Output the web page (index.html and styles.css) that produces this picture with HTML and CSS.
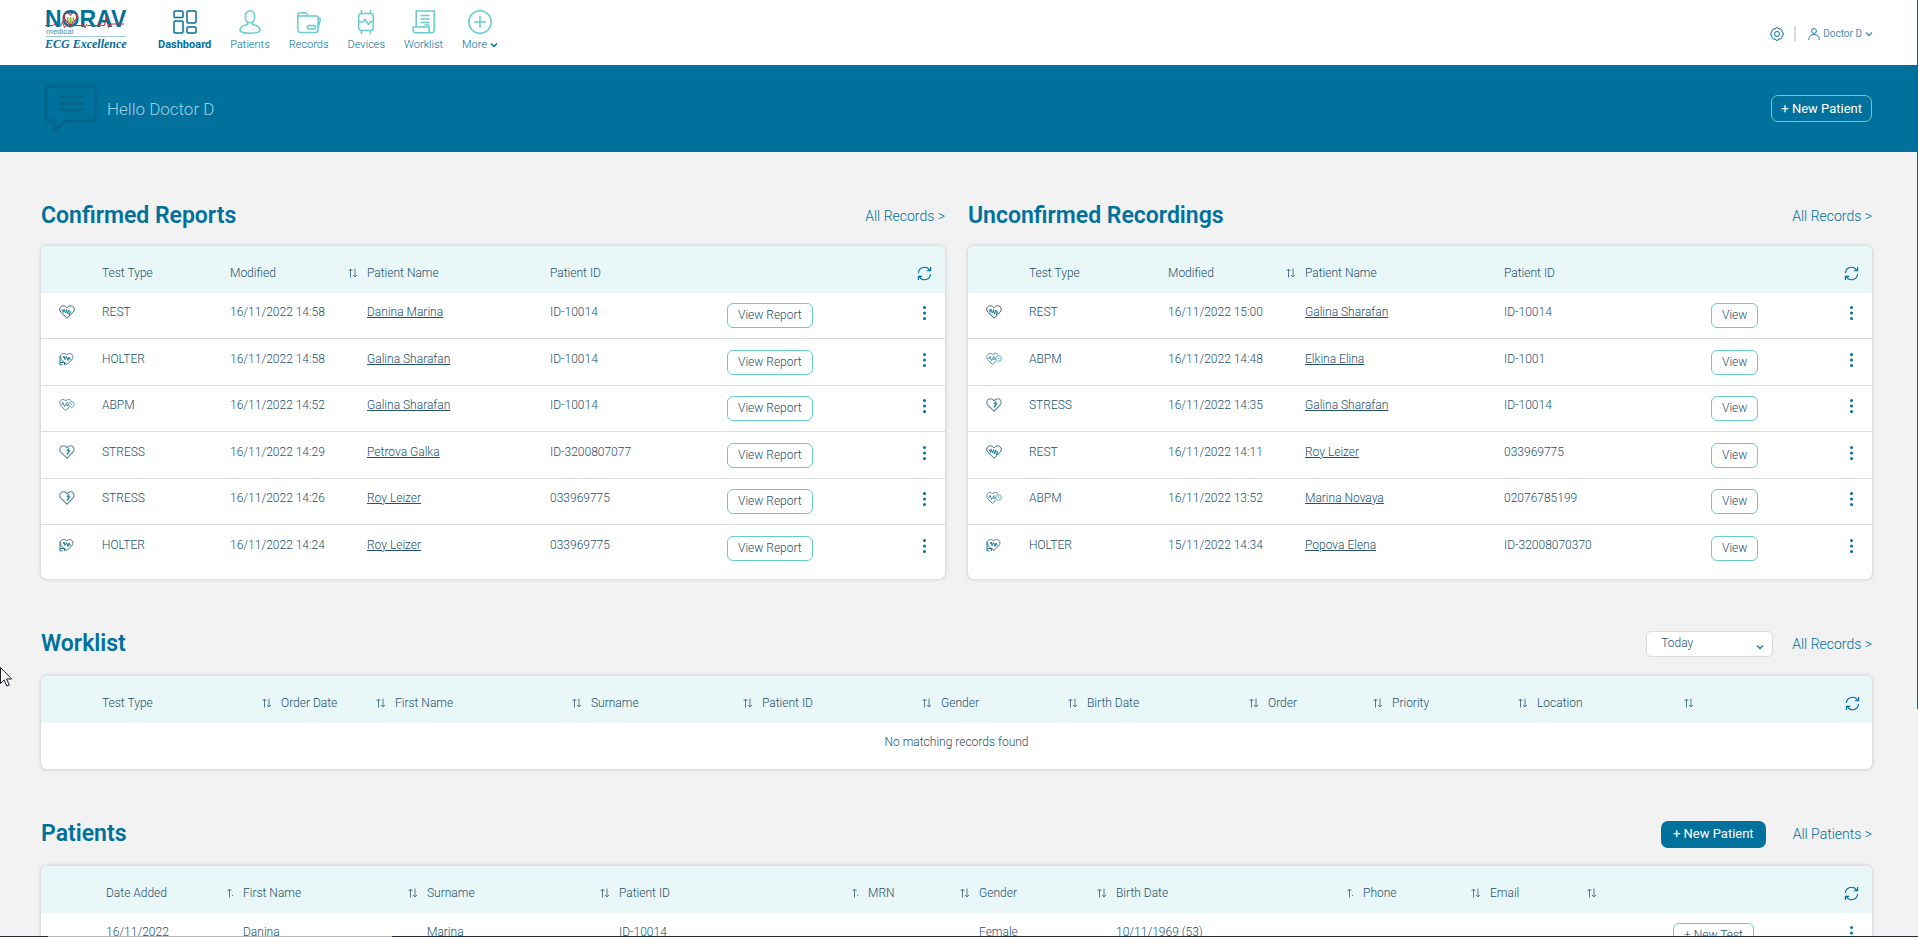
FILE: index.html
```html
<!DOCTYPE html>
<html lang="en">
<head>
<meta charset="utf-8">
<title>Dashboard</title>
<link rel="stylesheet" href="styles.css">
</head>
<body>
<svg class="sprite" aria-hidden="true">
  <symbol id="i-sort" viewBox="0 0 9 10"><path d="M2.5 9.5V1M.5 3L2.5 1l2 2M7 .5V9M5 7l2 2 2-2" fill="none" stroke="currentColor"/></symbol>
  <symbol id="i-sort-up" viewBox="0 0 6 10"><path d="M2.500 9.500V1M.5 3L2.500 1l2 2M5 7l1 1" fill="none" stroke="currentColor"/></symbol>
  <symbol id="i-refresh" viewBox="0 0 16 16"><path d="M1.500 7.500A6.500 6.500 0 0 1 13.500 4.500M14.500 1v4h-4M14.500 8.500A6.500 6.500 0 0 1 2.500 11.500M1.500 15v-4h4" fill="none" stroke="currentColor" stroke-width="1.200"/></symbol>
  <symbol id="i-dots" viewBox="0 0 3 14"><circle cx="1.500" cy="1.500" r="1.500" fill="currentColor"/><circle cx="1.500" cy="7" r="1.500" fill="currentColor"/><circle cx="1.500" cy="12.500" r="1.500" fill="currentColor"/></symbol>
  <symbol id="i-rest" viewBox="0 0 16 14"><path d="M8 13.200L1.800 7.200C-.6 4.200 1.400.8 4.300.8 6 .8 7.200 1.600 8 2.800 8.800 1.600 10 .8 11.700.8c2.900 0 4.900 3.400 2.500 6.400z" fill="none" stroke="#355f78"/><path d="M3 4.500l1.500 3 .5-3.500 1.500 4L7.500 4.500l1 4.500 1-4 1 5 1-3-1-1.500" fill="none" stroke="#1f86ad"/></symbol>
  <symbol id="i-holter" viewBox="0 0 16 14"><path d="M8 12.500L3.500 9C-.5 4.500 2 1.500 4.500 1.500c1.500 0 2.300.5 3 1.500.8-1 2-1.500 3-1.500 3 0 4.500 3 2.500 6z" fill="none" stroke="#54758a"/><path d="M1 13V3.500M1 10.500h4.500V13M1 12.800h2.500M4 6l1-2 1 3.500L7.500 4.500 9 8.500l1-3.500L11.500 8" fill="none" stroke="#1f7a9f"/></symbol>
  <symbol id="i-abpm" viewBox="0 0 16 14"><path d="M6.500 12.500L1.600 7.500C-.3 4.500 1.500 1.500 4 1.500c1.300 0 2.200.6 2.800 1.500.7-1 1.700-1.500 2.900-1.500 1.300 0 2 .5 2.600 1.200M6.500 12.500L10 9.500" fill="none" stroke="#66879a"/><circle cx="12.500" cy="6.500" r="2.800" fill="none" stroke="#62a8c4"/><path d="M2.500 7l1.500-2.500 1.500 4L8 4.500V8l2-1.500M12 5.500l1 1.500" fill="none" stroke="#3f93b5"/></symbol>
  <symbol id="i-stress" viewBox="0 0 16 14"><path d="M8 13.200L1.800 7.200C-.6 4.200 1.400.8 4.300.8 6 .8 7.200 1.600 8 2.800 8.800 1.600 10 .8 11.700.8c2.900 0 4.600 3.400 2.300 6.400z" fill="none" stroke="#64829a" stroke-width="1.100"/><path d="M10 3.500L8.500 5.500l2 .5L8 9.500" fill="none" stroke="#1f86ad" stroke-width="1.300"/></symbol>
  <symbol id="i-chev" viewBox="0 0 8 6"><path d="M1 1.500l3 3 3-3" fill="none" stroke="currentColor" stroke-width="1.500"/></symbol>
</svg>

<header class="topbar">
  <a class="logo" href="#" aria-label="Norav Medical">
    <svg width="84" height="44" viewBox="0 0 84 44">
      <text x="0" y="19" class="logo-name">NORAV</text>
      <circle cx="25.500" cy="11" r="5.500" fill="#fff"/>
      <path d="M25.500 17.500l-5.500-6C18 8 20.500 5 22.500 5c1.500 0 2.500.8 3 2 .5-1.200 1.500-2 3-2 2 0 4.500 3 2.500 6.500z" fill="#fff" stroke="#e0242f" stroke-width="1.200"/>
      <path d="M22.500 9v3.500l3 3.500 3-3.500V9M25.500 9v7M24 10v4M27 10v4" stroke="#78b928" fill="none"/>
      <path d="M0 17.500h8l1.500-1.500 1.500 1.500h5l1.500-4 2 6 1.500-2h3l1.500 2 2-2h9l1.500-1.500L40 20l1.500-3.500 1 1h10l2-1.500 2 1.500h3l1.500-9 2.500 11 1.500-3.500h6l2-1.500 2 1.500h4" stroke="#e0242f" fill="none"/>
      <text x="1" y="26" class="logo-sub">medical</text>
      <path d="M1 28.500h80" stroke="#9cc9dd"/>
      <text x="0" y="40" class="logo-tag">ECG Excellence</text>
    </svg>
  </a>
  <nav class="nav">
    <a class="nav-item active" href="#"><svg viewBox="0 0 24 24"><rect x="1" y="1" width="9" height="6.500" rx="1"/><rect x="14" y="1" width="9" height="12" rx="1"/><rect x="1" y="11" width="9" height="12" rx="1"/><rect x="14" y="17" width="9" height="6" rx="1"/></svg><span>Dashboard</span></a>
    <a class="nav-item" href="#"><svg viewBox="0 0 24 24"><rect x="7.500" y=".8" width="9" height="12" rx="4.500"/><path d="M9.500 11.500v3C5 15.500 2 16.500 2 20c0 2 4 3.200 10 3.200S22 22 22 20c0-3.500-3-4.500-7.500-5.500v-3"/></svg><span>Patients</span></a>
    <a class="nav-item" href="#"><svg viewBox="0 0 24 24"><path d="M.8 19V5c0-1.500.7-2.200 2-2.200h5.500c2 0 1.500 3.200 3.200 3.200H19c1.300 0 2 .7 2 2v12c0 1.500-.8 2.400-2 2.400H3c-1.500 0-2.200-1.400-2.200-3.400zM1 6h10M20 22.400l3.200-12.400V8.500L21 8"/><rect x="10.500" y="15.500" width="8" height="3.500" rx="1"/></svg><span>Records</span></a>
    <a class="nav-item" href="#"><svg viewBox="0 0 24 24"><rect x="4.700" y="3.500" width="14.600" height="17" rx="3"/><path d="M7.500 0v3.500M16.500 0v3.500M7.500 20.500V24M16.500 20.500V24M5 12h3.500l2.500-2.500 3.500 5 2.500-3h2.500"/></svg><span>Devices</span></a>
    <a class="nav-item" href="#"><svg viewBox="0 0 24 24"><path d="M4.200 17V1h18v18.500c0 2-1 3.300-2.600 3.300H4C1 22.800 1 21 1 17h16v3c0 1.800 1 2.800 2.600 2.800M8.500 5.500h9M8.500 9h9M8.500 12.500h9M12.500 15h5"/></svg><span>Worklist</span></a>
    <a class="nav-item" href="#"><svg viewBox="0 0 24 24"><circle cx="12" cy="12" r="11.200"/><path d="M12 6v12M6 12h12"/></svg><span>More <svg class="chev"><use href="#i-chev"/></svg></span></a>
  </nav>
  <div class="account">
    <button class="icon-btn" aria-label="Settings"><svg width="16" height="16" viewBox="0 0 16 16" fill="none" stroke="currentColor"><path d="M12.800 6a2.050 2.050 0 0 1 0 4 2.050 2.050 0 0 1-2.800 2.800 2.050 2.050 0 0 1-4 0 2.050 2.050 0 0 1-2.800-2.800 2.050 2.050 0 0 1 0-4 2.050 2.050 0 0 1 2.800-2.800 2.050 2.050 0 0 1 4 0 2.050 2.050 0 0 1 2.800 2.800z"/><circle cx="8" cy="8" r="2.500"/></svg></button>
    <span class="divider"></span>
    <button class="user"><svg width="12" height="12" viewBox="0 0 12 12" fill="none" stroke="#1f7ba5"><circle cx="6" cy="3" r="2.400"/><path d="M.8 12c0-4 2-5.400 5.200-5.400s5.200 1.400 5.200 5.400"/></svg><span>Doctor D</span><svg class="chev"><use href="#i-chev"/></svg></button>
  </div>
</header>

<div class="banner">
  <svg width="54" height="50" viewBox="0 0 54 50" fill="none" stroke="#02658e" stroke-width="3"><path d="M7 2h40c3.500 0 5 1.500 5 5v25c0 3.500-1.500 5-5 5H22L10 46.500V37H7c-3.500 0-5-1.500-5-5V7c0-3.500 1.500-5 5-5z"/><path d="M15 13h24M15 19.500h24M15 26h24"/></svg>
  <p class="hello">Hello Doctor D</p>
  <button class="btn btn-ghost">+ New Patient</button>
</div>

<main class="main">
  <div class="pair">
    <section>
      <div class="head"><h2>Confirmed Reports</h2><a class="more" href="#">All Records &gt;</a></div>
      <div class="card">
        <table class="confirmed">
          <colgroup><col><col><col><col><col><col><col></colgroup>
          <thead><tr><th></th><th>Test Type</th><th><div class="th">Modified<svg class="sort"><use href="#i-sort"/></svg></div></th><th>Patient Name</th><th>Patient ID</th><th></th><th class="end"><button class="icon-btn" aria-label="Refresh"><svg class="refresh"><use href="#i-refresh"/></svg></button></th></tr></thead>
          <tbody>
            <tr><td class="ic"><svg class="type"><use href="#i-rest"/></svg></td><td>REST</td><td>16/11/2022 14:58</td><td><a href="#">Danina Marina</a></td><td>ID-10014</td><td class="act"><button class="btn-row">View Report</button></td><td class="end"><button class="icon-btn" aria-label="Actions"><svg class="dots"><use href="#i-dots"/></svg></button></td></tr>
            <tr><td class="ic"><svg class="type"><use href="#i-holter"/></svg></td><td>HOLTER</td><td>16/11/2022 14:58</td><td><a href="#">Galina Sharafan</a></td><td>ID-10014</td><td class="act"><button class="btn-row">View Report</button></td><td class="end"><button class="icon-btn" aria-label="Actions"><svg class="dots"><use href="#i-dots"/></svg></button></td></tr>
            <tr><td class="ic"><svg class="type"><use href="#i-abpm"/></svg></td><td>ABPM</td><td>16/11/2022 14:52</td><td><a href="#">Galina Sharafan</a></td><td>ID-10014</td><td class="act"><button class="btn-row">View Report</button></td><td class="end"><button class="icon-btn" aria-label="Actions"><svg class="dots"><use href="#i-dots"/></svg></button></td></tr>
            <tr><td class="ic"><svg class="type"><use href="#i-stress"/></svg></td><td>STRESS</td><td>16/11/2022 14:29</td><td><a href="#">Petrova Galka</a></td><td>ID-3200807077</td><td class="act"><button class="btn-row">View Report</button></td><td class="end"><button class="icon-btn" aria-label="Actions"><svg class="dots"><use href="#i-dots"/></svg></button></td></tr>
            <tr><td class="ic"><svg class="type"><use href="#i-stress"/></svg></td><td>STRESS</td><td>16/11/2022 14:26</td><td><a href="#">Roy Leizer</a></td><td>033969775</td><td class="act"><button class="btn-row">View Report</button></td><td class="end"><button class="icon-btn" aria-label="Actions"><svg class="dots"><use href="#i-dots"/></svg></button></td></tr>
            <tr><td class="ic"><svg class="type"><use href="#i-holter"/></svg></td><td>HOLTER</td><td>16/11/2022 14:24</td><td><a href="#">Roy Leizer</a></td><td>033969775</td><td class="act"><button class="btn-row">View Report</button></td><td class="end"><button class="icon-btn" aria-label="Actions"><svg class="dots"><use href="#i-dots"/></svg></button></td></tr>
          </tbody>
        </table>
      </div>
    </section>
    <section>
      <div class="head"><h2>Unconfirmed Recordings</h2><a class="more" href="#">All Records &gt;</a></div>
      <div class="card">
        <table class="unconfirmed">
          <colgroup><col><col><col><col><col><col><col></colgroup>
          <thead><tr><th></th><th>Test Type</th><th><div class="th">Modified<svg class="sort"><use href="#i-sort"/></svg></div></th><th>Patient Name</th><th>Patient ID</th><th></th><th class="end"><button class="icon-btn" aria-label="Refresh"><svg class="refresh"><use href="#i-refresh"/></svg></button></th></tr></thead>
          <tbody>
            <tr><td class="ic"><svg class="type"><use href="#i-rest"/></svg></td><td>REST</td><td>16/11/2022 15:00</td><td><a href="#">Galina Sharafan</a></td><td>ID-10014</td><td class="act"><button class="btn-row">View</button></td><td class="end"><button class="icon-btn" aria-label="Actions"><svg class="dots"><use href="#i-dots"/></svg></button></td></tr>
            <tr><td class="ic"><svg class="type"><use href="#i-abpm"/></svg></td><td>ABPM</td><td>16/11/2022 14:48</td><td><a href="#">Elkina Elina</a></td><td>ID-1001</td><td class="act"><button class="btn-row">View</button></td><td class="end"><button class="icon-btn" aria-label="Actions"><svg class="dots"><use href="#i-dots"/></svg></button></td></tr>
            <tr><td class="ic"><svg class="type"><use href="#i-stress"/></svg></td><td>STRESS</td><td>16/11/2022 14:35</td><td><a href="#">Galina Sharafan</a></td><td>ID-10014</td><td class="act"><button class="btn-row">View</button></td><td class="end"><button class="icon-btn" aria-label="Actions"><svg class="dots"><use href="#i-dots"/></svg></button></td></tr>
            <tr><td class="ic"><svg class="type"><use href="#i-rest"/></svg></td><td>REST</td><td>16/11/2022 14:11</td><td><a href="#">Roy Leizer</a></td><td>033969775</td><td class="act"><button class="btn-row">View</button></td><td class="end"><button class="icon-btn" aria-label="Actions"><svg class="dots"><use href="#i-dots"/></svg></button></td></tr>
            <tr><td class="ic"><svg class="type"><use href="#i-abpm"/></svg></td><td>ABPM</td><td>16/11/2022 13:52</td><td><a href="#">Marina Novaya</a></td><td>02076785199</td><td class="act"><button class="btn-row">View</button></td><td class="end"><button class="icon-btn" aria-label="Actions"><svg class="dots"><use href="#i-dots"/></svg></button></td></tr>
            <tr><td class="ic"><svg class="type"><use href="#i-holter"/></svg></td><td>HOLTER</td><td>15/11/2022 14:34</td><td><a href="#">Popova Elena</a></td><td>ID-32008070370</td><td class="act"><button class="btn-row">View</button></td><td class="end"><button class="icon-btn" aria-label="Actions"><svg class="dots"><use href="#i-dots"/></svg></button></td></tr>
          </tbody>
        </table>
      </div>
    </section>
  </div>

  <section>
    <div class="head"><h2>Worklist</h2>
      <div class="picker"><select aria-label="Period"><option>Today</option></select><svg class="chev"><use href="#i-chev"/></svg></div>
      <a class="more" href="#">All Records &gt;</a></div>
    <div class="card">
      <table class="worklist">
        <colgroup><col><col><col><col><col><col><col><col><col><col><col><col><col></colgroup>
        <thead><tr><th></th>
          <th><div class="th">Test Type<svg class="sort"><use href="#i-sort"/></svg></div></th>
          <th><div class="th">Order Date<svg class="sort"><use href="#i-sort"/></svg></div></th>
          <th><div class="th">First Name<svg class="sort"><use href="#i-sort"/></svg></div></th>
          <th><div class="th">Surname<svg class="sort"><use href="#i-sort"/></svg></div></th>
          <th><div class="th">Patient ID<svg class="sort"><use href="#i-sort"/></svg></div></th>
          <th><div class="th">Gender<svg class="sort"><use href="#i-sort"/></svg></div></th>
          <th><div class="th">Birth Date<svg class="sort"><use href="#i-sort"/></svg></div></th>
          <th><div class="th">Order<svg class="sort"><use href="#i-sort"/></svg></div></th>
          <th><div class="th">Priority<svg class="sort"><use href="#i-sort"/></svg></div></th>
          <th><div class="th">Location<svg class="sort"><use href="#i-sort"/></svg></div></th>
          <th></th><th class="end"><button class="icon-btn" aria-label="Refresh"><svg class="refresh"><use href="#i-refresh"/></svg></button></th></tr></thead>
        <tbody><tr><td class="empty" colspan="13">No matching records found</td></tr></tbody>
      </table>
    </div>
  </section>

  <section>
    <div class="head"><h2>Patients</h2><button class="btn btn-solid">+ New Patient</button><a class="more" href="#">All Patients &gt;</a></div>
    <div class="card">
      <table class="patients">
        <colgroup><col><col><col><col><col><col><col><col><col><col><col><col><col></colgroup>
        <thead><tr><th></th>
          <th><div class="th">Date Added<svg class="sort-up"><use href="#i-sort-up"/></svg></div></th>
          <th><div class="th">First Name<svg class="sort"><use href="#i-sort"/></svg></div></th>
          <th><div class="th">Surname<svg class="sort"><use href="#i-sort"/></svg></div></th>
          <th><div class="th">Patient ID<svg class="sort-up"><use href="#i-sort-up"/></svg></div></th>
          <th><div class="th">MRN<svg class="sort"><use href="#i-sort"/></svg></div></th>
          <th><div class="th">Gender<svg class="sort"><use href="#i-sort"/></svg></div></th>
          <th><div class="th">Birth Date<svg class="sort-up"><use href="#i-sort-up"/></svg></div></th>
          <th><div class="th">Phone<svg class="sort"><use href="#i-sort"/></svg></div></th>
          <th><div class="th">Email<svg class="sort"><use href="#i-sort"/></svg></div></th>
          <th></th><th></th><th class="end"><button class="icon-btn" aria-label="Refresh"><svg class="refresh"><use href="#i-refresh"/></svg></button></th></tr></thead>
        <tbody><tr><td></td><td>16/11/2022</td><td>Danina</td><td>Marina</td><td>ID-10014</td><td></td><td>Female</td><td>10/11/1969 (53)</td><td></td><td></td><td></td><td class="act"><button class="btn-row">+ New Test</button></td><td class="end"><button class="icon-btn" aria-label="Actions"><svg class="dots"><use href="#i-dots"/></svg></button></td></tr></tbody>
      </table>
    </div>
  </section>
</main>

<div class="scroll-thumb"></div>
<div class="edge"></div>
<svg class="pointer" width="14" height="20" viewBox="0 0 14 20"><path d="M.5.500v16l3.700-3.500 2.600 6 2.500-1-2.600-6h5z" fill="#fff" stroke="#1a1a2a"/></svg>
</body>
</html>
```

FILE: styles.css
```css
* { box-sizing: border-box; }

body {
  margin: 0;
  height: 100vh;
  display: flex;
  flex-direction: column;
  overflow: hidden;
  background: #f2f2f2;
  color: #24506c;
  font-family: Roboto, "Liberation Sans", sans-serif;
  font-weight: 300;
  font-size: 12px;
  line-height: 16px;
}

button, select { font: inherit; color: inherit; cursor: pointer; }
a { color: inherit; }
.sprite { display: none; }

/* Top bar */
.topbar {
  flex: none;
  display: flex;
  align-items: flex-start;
  height: 65px;
  padding: 0 45px;
  background: #fff;
  color: #00709c;
}
.logo { margin: 8px 29px 0 0; line-height: 0; }
.logo svg { overflow: visible; }
.logo-name { font: bold 23px "Liberation Sans", sans-serif; fill: #00709c; }
.logo-sub { font: 8px "Liberation Sans", sans-serif; fill: #3d94b8; }
.logo-tag { font: italic bold 12px "Liberation Serif", serif; fill: #00709c; }

.nav { display: flex; gap: 19px; padding-top: 10px; }
.nav-item {
  display: flex;
  flex-direction: column;
  align-items: center;
  gap: 3px;
  font-size: 11px;
  text-decoration: none;
}
.nav-item > svg {
  width: 24px;
  height: 24px;
  fill: none;
  stroke: #66cccc;
  stroke-width: 1.5;
}
.nav-item.active { font-weight: 700; }
.nav-item.active > svg { stroke: #00709c; }
.chev { width: 8px; height: 6px; }

.account { display: flex; align-items: center; margin-left: auto; padding-top: 26px; }
.icon-btn { display: inline-flex; padding: 0; border: 0; background: none; color: #00709c; }
.divider { width: 2px; height: 16px; margin: 0 12px 0 9px; background: #ddd; }
.user {
  display: flex;
  align-items: center;
  gap: 3px;
  padding: 0;
  border: 0;
  background: none;
  font-size: 10px;
  font-weight: 400;
  color: #4a8fb3;
}

/* Greeting banner */
.banner {
  flex: none;
  display: flex;
  align-items: center;
  gap: 9px;
  height: 87px;
  padding: 0 46px 0 44px;
  background: #00709c;
}
.hello { margin: 0; font-size: 17px; color: #a3cfe0; }
.btn { height: 27px; border-radius: 7px; font-size: 13px; font-weight: 400; color: #fff; white-space: nowrap; }
.btn-ghost { margin-left: auto; padding: 0 9px; border: 1px solid #66cccc; background: none; }
.btn-solid { margin-right: 8px; padding: 0 12px; border: 0; background: #00709c; }

/* Content */
.main {
  flex: 1;
  min-height: 0;
  overflow-y: auto;
  scrollbar-width: none;
  display: flex;
  flex-direction: column;
  gap: 45px;
  padding: 42px 46px 45px 41px;
}
.main > * { flex: none; }
.pair { display: grid; grid-template-columns: 1fr 1fr; gap: 23px; }
.pair .head { padding-top: 3px; }

.head { display: flex; align-items: center; gap: 19px; height: 40px; margin-bottom: 12px; }
h2 { margin: 0 auto 0 0; font-size: 23px; font-weight: 600; color: #00709c; }
.more { font-size: 14px; color: #00709c; text-decoration: none; }

.picker { position: relative; width: 127px; }
.picker select {
  display: block;
  appearance: none;
  width: 100%;
  height: 26px;
  padding: 0 14px 3px;
  border: 1px solid #d9dcdd;
  border-radius: 5px;
  background: #fff;
}
.picker .chev { position: absolute; right: 9px; bottom: 7px; color: #1f7ab0; }

.card {
  overflow: hidden;
  border-radius: 6px;
  background: #fff;
  box-shadow: 0 0 4px rgba(0, 0, 0, .2);
}
table { width: 100%; table-layout: fixed; border-collapse: separate; border-spacing: 0; }
th, td { padding: 11px 0 0; text-align: left; vertical-align: top; white-space: nowrap; font-weight: 300; }
th { height: 47px; padding-top: 19px; background: #e9f7f8; font-size: 12px; }
td { height: 46px; border-bottom: 1px solid #d9dcdd; }
.th { display: flex; align-items: center; justify-content: space-between; padding-right: 10px; }
.sort { width: 9px; height: 10px; color: #56788c; }
.sort-up { width: 6px; height: 10px; color: #56788c; }
.refresh { width: 15px; height: 15px; }
.dots { width: 3px; height: 14px; }
.type { display: block; width: 16px; height: 14px; }
.ic { padding: 12px 0 0 18px; }
.end { padding-top: 20px; text-align: center; }
td.end { padding-top: 13px; }
.act { padding-top: 10px; }
tr:nth-child(even) td { height: 47px; padding-top: 12px; }
tr:nth-child(even) td.ic { padding-top: 13px; }
tr:nth-child(even) td.end { padding-top: 14px; }
tr:nth-child(even) td.act { padding-top: 11px; }
tr:last-child td { height: 54px; border-bottom: 0; }
tr:last-child td.empty { height: 46px; text-align: center; }
.btn-row {
  height: 25px;
  padding: 0 10px 2px;
  border: 1px solid #66cccc;
  border-radius: 6px;
  background: #fff;
}

.confirmed col:nth-child(1) { width: 61px; }
.confirmed col:nth-child(2) { width: 128px; }
.confirmed col:nth-child(3) { width: 137px; }
.confirmed col:nth-child(4) { width: 183px; }
.confirmed col:nth-child(5) { width: 177px; }
.confirmed col:nth-child(6) { width: 176px; }
.confirmed col:nth-child(7) { width: 42px; }

.unconfirmed col:nth-child(1) { width: 61px; }
.unconfirmed col:nth-child(2) { width: 139px; }
.unconfirmed col:nth-child(3) { width: 137px; }
.unconfirmed col:nth-child(4) { width: 199px; }
.unconfirmed col:nth-child(5) { width: 207px; }
.unconfirmed col:nth-child(6) { width: 119px; }
.unconfirmed col:nth-child(7) { width: 42px; }

.worklist col:nth-child(1) { width: 61px; }
.worklist col:nth-child(2) { width: 179px; }
.worklist col:nth-child(3) { width: 114px; }
.worklist col:nth-child(4) { width: 196px; }
.worklist col:nth-child(5) { width: 171px; }
.worklist col:nth-child(6) { width: 179px; }
.worklist col:nth-child(7) { width: 146px; }
.worklist col:nth-child(8) { width: 181px; }
.worklist col:nth-child(9) { width: 124px; }
.worklist col:nth-child(10) { width: 145px; }
.worklist col:nth-child(11) { width: 166px; }
.worklist col:nth-child(12) { width: 129px; }
.worklist col:nth-child(13) { width: 40px; }

.patients col:nth-child(1) { width: 65px; }
.patients col:nth-child(2) { width: 137px; }
.patients col:nth-child(3) { width: 184px; }
.patients col:nth-child(4) { width: 192px; }
.patients col:nth-child(5) { width: 249px; }
.patients col:nth-child(6) { width: 111px; }
.patients col:nth-child(7) { width: 137px; }
.patients col:nth-child(8) { width: 247px; }
.patients col:nth-child(9) { width: 127px; }
.patients col:nth-child(10) { width: 116px; }
.patients col:nth-child(11) { width: 67px; }
.patients col:nth-child(12) { width: 157px; }
.patients col:nth-child(13) { width: 42px; }

/* Overlays at the window edges */
.scroll-thumb { position: fixed; top: 0; right: 0; width: 1px; height: 709px; background: #10607f; }
.edge {
  position: fixed;
  left: 0;
  right: 0;
  bottom: 0;
  height: 1px;
  background: linear-gradient(90deg, #1b2f3d 48px, #b9b9b9 48px, #b9b9b9 392px, #1b2f3d 392px);
}
.pointer { position: fixed; left: 0; top: 667px; }
```
